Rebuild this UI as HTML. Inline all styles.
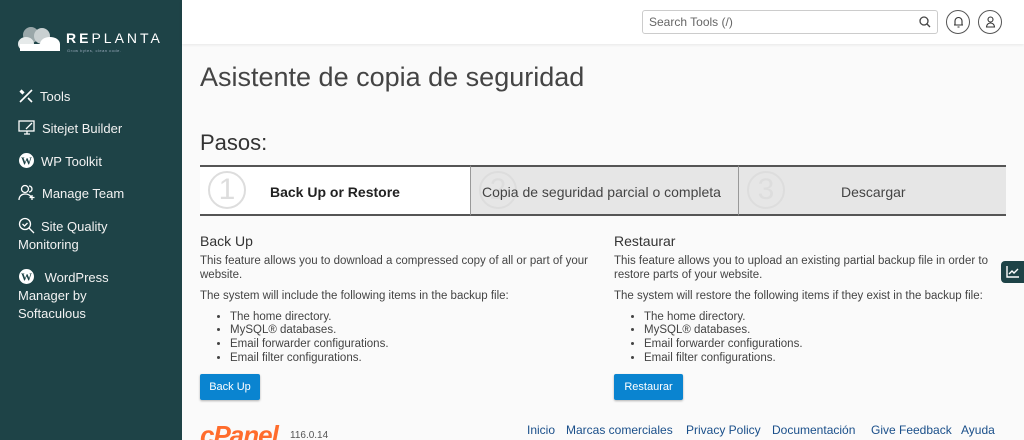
<!DOCTYPE html>
<html><head><meta charset="utf-8"><style>
*{margin:0;padding:0;box-sizing:border-box}
html,body{width:1024px;height:440px;overflow:hidden}
body{background:#fafafa;font-family:"Liberation Sans",sans-serif;color:#333;position:relative}
.side{position:absolute;left:0;top:0;width:182px;height:440px;background:#1e4347;color:#fff}
.nav{position:absolute;left:18px;font-size:13px;line-height:18px;color:#f2f2f2}
.nav svg{vertical-align:-3px;margin-right:6px}
.hdr{position:absolute;left:182px;top:0;right:0;height:44px;background:#fff;box-shadow:0 1px 3px rgba(0,0,0,.08)}
.abs{position:absolute}
.step{position:absolute;top:165px;height:51px;border-top:2px solid #555;border-bottom:2px solid #555;font-size:14px}
.num{position:absolute;left:8px;top:4px;width:38px;height:38px;border:2px solid #ddd;border-radius:50%;color:#ddd;font-size:30px;line-height:34px;text-align:center;font-weight:300}
.col h3{font-size:14px;font-weight:normal;color:#333;margin-bottom:6px}
.col p{font-size:11.5px;line-height:13.5px;margin-bottom:8px;color:#444}
.col ul{font-size:11.5px;line-height:13.7px;margin-left:30px;margin-top:-1px;color:#444}
.btn{position:absolute;top:374px;height:26px;background:#0a84d0;color:#fff;font-size:11px;line-height:26px;text-align:center;border-radius:2px;box-shadow:0 1px 2px rgba(0,0,0,.3)}
.ft{position:absolute;top:423px;font-size:12px;color:#1a4f8a}
</style></head><body>
<div class="side">
 <svg class="abs" style="left:18px;top:26px" width="44" height="26" viewBox="0 0 44 26"><circle cx="13" cy="9" r="8" fill="#9aa7a9"/><circle cx="24" cy="10" r="8" fill="#c9d0d1"/><ellipse cx="8" cy="18" rx="8" ry="7" fill="#e6eaea"/><ellipse cx="32" cy="18" rx="10" ry="7" fill="#fff"/><rect x="2" y="18" width="40" height="7" fill="#fff"/></svg>
 <div class="abs" style="left:66px;top:30px;font-size:14px;letter-spacing:3px;color:#fff"><b>RE</b>PLANTA</div>
 <div class="abs" style="left:67px;top:48px;font-size:4px;color:#9ab;letter-spacing:.5px">Grow bytes, clean code.</div>
 <div class="nav" style="top:88px"><svg width="16" height="16" viewBox="0 0 16 16" stroke="#fff" stroke-width="1.6" fill="none"><path d="M2 14L14 2M3 2l3 3M2 3l3 3M10 10l4 4"/></svg>Tools</div>
 <div class="nav" style="top:120px"><svg width="18" height="16" viewBox="0 0 18 16" stroke="#fff" stroke-width="1.3" fill="none"><rect x="1" y="1" width="15" height="10"/><path d="M6 14h6M9 11v3M8 9l6-6"/></svg>Sitejet Builder</div>
 <div class="nav" style="top:152px"><svg width="17" height="17" viewBox="0 0 17 17"><circle cx="8.5" cy="8.5" r="7.5" fill="#fff"/><text x="8.5" y="12.5" font-size="11" font-weight="bold" text-anchor="middle" fill="#1e4347" font-family="Liberation Serif">W</text></svg>WP Toolkit</div>
 <div class="nav" style="top:184px"><svg width="18" height="17" viewBox="0 0 18 17" stroke="#fff" stroke-width="1.3" fill="none"><circle cx="7" cy="5" r="3.5"/><path d="M1 16c0-4 3-6 6-6s5 1 6 3M14 11v5M11.5 13.5h5M11 2a3 3 0 0 1 0 6"/></svg>Manage Team</div>
 <div class="nav" style="top:217px"><svg width="17" height="17" viewBox="0 0 17 17" stroke="#fff" stroke-width="1.3" fill="none"><circle cx="7" cy="7" r="5.5"/><path d="M11 11l5 5M4.5 7l2 2 3-3"/></svg>Site Quality<br>Monitoring</div>
 <div class="nav" style="top:268px"><svg width="17" height="17" viewBox="0 0 17 17"><circle cx="8.5" cy="8.5" r="7.5" fill="#fff"/><text x="8.5" y="12.5" font-size="11" font-weight="bold" text-anchor="middle" fill="#1e4347" font-family="Liberation Serif">W</text></svg> WordPress<br>Manager by<br>Softaculous</div>
</div>
<div class="hdr">
 <div class="abs" style="left:460px;top:10px;width:296px;height:24px;border:1px solid #ccc;border-radius:3px;font-size:12px;color:#666;line-height:22px;padding-left:6px">Search Tools (/)
  <svg class="abs" style="right:6px;top:5px" width="12" height="12" viewBox="0 0 12 12" stroke="#444" stroke-width="1.3" fill="none"><circle cx="5" cy="5" r="4"/><path d="M8 8l3 3"/></svg></div>
 <div class="abs" style="left:764px;top:10px;width:24px;height:24px;border:1px solid #555;border-radius:50%"><svg class="abs" style="left:6px;top:5px" width="11" height="12" viewBox="0 0 11 12" stroke="#333" stroke-width="1.1" fill="none"><path d="M2 9V5a3.5 3.5 0 0 1 7 0v4zM1 9h9M4.5 11h2"/></svg></div>
 <div class="abs" style="left:796px;top:10px;width:24px;height:24px;border:1px solid #555;border-radius:50%"><svg class="abs" style="left:6px;top:5px" width="11" height="12" viewBox="0 0 11 12" stroke="#333" stroke-width="1.1" fill="none"><circle cx="5.5" cy="3.5" r="2.5"/><path d="M1.5 11a4 4 0 0 1 8 0z"/></svg></div>
</div>
<div class="abs" style="left:200px;top:62px;font-size:27px;color:#444;font-weight:300">Asistente de copia de seguridad</div>
<div class="abs" style="left:200px;top:130px;font-size:22px;color:#333">Pasos:</div>
<div class="step" style="left:200px;width:270px;background:#fff"><div class="num">1</div><div class="abs" style="left:70px;top:17px;font-weight:bold;color:#222">Back Up or Restore</div></div>
<div class="step" style="left:470px;width:268px;background:#e6e6e6;border-left:1px solid #999"><div class="num">2</div><div class="abs" style="left:11px;top:17px;color:#444">Copia de seguridad parcial o completa</div></div>
<div class="step" style="left:738px;width:268px;background:#e6e6e6;border-left:1px solid #999"><div class="num">3</div><div class="abs" style="left:102px;top:17px;color:#444">Descargar</div></div>
<div class="col abs" style="left:200px;top:233px;width:400px"><h3>Back Up</h3><p>This feature allows you to download a compressed copy of all or part of your website.</p><p>The system will include the following items in the backup file:</p><ul><li>The home directory.</li><li>MySQL® databases.</li><li>Email forwarder configurations.</li><li>Email filter configurations.</li></ul></div>
<div class="col abs" style="left:614px;top:233px;width:375px"><h3>Restaurar</h3><p>This feature allows you to upload an existing partial backup file in order to restore parts of your website.</p><p>The system will restore the following items if they exist in the backup file:</p><ul><li>The home directory.</li><li>MySQL® databases.</li><li>Email forwarder configurations.</li><li>Email filter configurations.</li></ul></div>
<div class="btn" style="left:200px;width:60px">Back Up</div>
<div class="btn" style="left:614px;width:69px">Restaurar</div>
<div class="abs" style="left:1001px;top:261px;width:23px;height:22px;background:#1e4347;border-radius:4px 0 0 4px"><svg class="abs" style="left:5px;top:5px" width="13" height="12" viewBox="0 0 13 12" stroke="#fff" stroke-width="1.4" fill="none"><path d="M1 0v11h12M3 8l3-3 2 2 4-4"/></svg></div>
<div class="abs" style="left:200px;top:420px;font-size:26px;font-weight:bold;font-style:italic;color:#ff6c2c;letter-spacing:-1px">cPanel</div>
<div class="abs" style="left:290px;top:430px;font-size:10px;color:#555">116.0.14</div>
<div class="ft" style="left:527px">Inicio</div>
<div class="ft" style="left:566px">Marcas comerciales</div>
<div class="ft" style="left:686px">Privacy Policy</div>
<div class="ft" style="left:772px">Documentación</div>
<div class="ft" style="left:871px">Give Feedback</div>
<div class="ft" style="left:961px">Ayuda</div>
</body></html>
